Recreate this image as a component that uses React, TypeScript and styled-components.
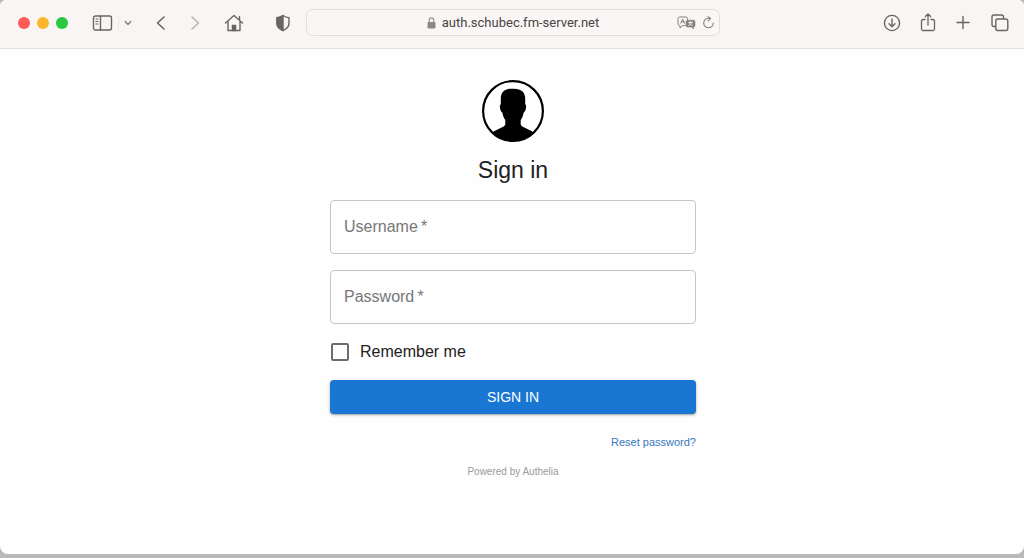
import React, { useState } from "react";
import styled, { createGlobalStyle } from "styled-components";

const GlobalStyle = createGlobalStyle`
  *, *::before, *::after { box-sizing: border-box; }
  body {
    margin: 0;
    background: #b9b9b9;
    font-family: "Liberation Sans", Arial, sans-serif;
    color: #212121;
  }
`;

const Desktop = styled.div`
  display: flex;
  min-height: 100vh;
  padding-bottom: 4px;
`;

const Window = styled.div`
  flex: 1;
  display: flex;
  flex-direction: column;
  min-width: 0;
  background: #fefefe;
  border-radius: 6px 6px 8px 8px;
  overflow: hidden;
`;

const Toolbar = styled.header`
  display: grid;
  grid-template-columns: 1fr minmax(0, 414px) 1fr;
  align-items: center;
  height: 49px;
  padding: 0 14px 3px 16px;
  background: #f9f5f4;
  border-bottom: 1px solid #e3dfde;
`;

const ToolGroup = styled.div<{ $end?: boolean }>`
  display: flex;
  align-items: center;
  gap: ${({ $end }) => ($end ? "16px" : "0")};
  justify-content: ${({ $end }) => ($end ? "flex-end" : "flex-start")};
`;

const TrafficLights = styled.div`
  display: flex;
  gap: 7px;
  padding-left: 2px;
`;

const Light = styled.button<{ $color: string }>`
  width: 12px;
  height: 12px;
  padding: 0;
  border: 0;
  border-radius: 50%;
  background: ${({ $color }) => $color};
`;

const ToolDivider = styled.span`
  width: 1px;
  height: 16px;
  margin-left: 5px;
  background: #eeeae9;
`;

const ToolButton = styled.button<{ $before?: number; $color?: string }>`
  display: flex;
  flex: none;
  margin: 0 0 0 ${({ $before = 0 }) => $before}px;
  padding: 0;
  border: 0;
  background: none;
  color: ${({ $color = "#696564" }) => $color};

  svg {
    display: block;
    fill: none;
    stroke: currentColor;
    stroke-width: 1.4;
    stroke-linecap: round;
    stroke-linejoin: round;
  }
`;

const AddressBar = styled.div`
  display: grid;
  grid-template-columns: 1fr auto 1fr;
  align-items: center;
  height: 27px;
  padding: 0 4px;
  border: 1px solid #e3dfde;
  border-radius: 7px;
  background: #faf6f5;
`;

const Address = styled.div`
  grid-column: 2;
  display: flex;
  align-items: center;
  gap: 6px;
  font: 13px/18px Roboto, sans-serif;
  color: #484443;
`;

const AddressTools = styled.div`
  display: flex;
  align-items: center;
  justify-content: flex-end;
  gap: 6px;
`;

const Page = styled.main`
  display: flex;
  flex-direction: column;
  align-items: center;
  padding: 31px 14px 24px 16px;
`;

const Title = styled.h1`
  margin: 14px 0 16px;
  font-size: 23px;
  line-height: 28px;
  font-weight: 400;
`;

const Form = styled.form`
  display: flex;
  flex-direction: column;
  width: 100%;
  max-width: 366px;
`;

const Field = styled.div`
  display: grid;
  height: 54px;
  margin-bottom: 16px;
`;

const FieldInput = styled.input`
  grid-area: 1 / 1;
  min-width: 0;
  padding: 0 14px;
  border: 1px solid #c6c6c6;
  border-radius: 4px;
  background: transparent;
  font: inherit;
  color: inherit;
  outline: none;

  &:focus { border-color: #1976d2; }
`;

const FieldLabel = styled.label<{ $hidden: boolean }>`
  grid-area: 1 / 1;
  align-self: center;
  padding-left: 14px;
  font-size: 16px;
  line-height: 24px;
  color: #777;
  pointer-events: none;
  visibility: ${({ $hidden }) => ($hidden ? "hidden" : "visible")};
`;

const Remember = styled.label`
  display: flex;
  align-items: center;
  gap: 11px;
  height: 24px;
  padding-left: 1px;
  margin-bottom: 16px;
  font-size: 16px;
`;

const Checkbox = styled.input`
  appearance: none;
  width: 18px;
  height: 18px;
  margin: 0;
  border: 2px solid #6c6c6c;
  border-radius: 2px;

  &:checked { background: #1976d2; border-color: #1976d2; }
`;

const Submit = styled.button`
  height: 34px;
  padding: 0;
  border: 0;
  border-radius: 4px;
  background: #1976d2;
  color: #fff;
  font: 14px/24px "Liberation Sans", Arial, sans-serif;
  text-transform: uppercase;
  box-shadow: 0 1px 2px rgba(0, 0, 0, 0.3), 0 1px 4px rgba(0, 0, 0, 0.12);
`;

const ResetLink = styled.a`
  align-self: flex-end;
  margin-top: 20px;
  font-size: 11px;
  line-height: 16px;
  color: #3878be;
  text-decoration: none;
`;

const Powered = styled.a`
  margin-top: 14px;
  font-size: 10px;
  line-height: 16px;
  color: #9b9b9b;
  text-decoration: none;
`;

function Avatar() {
  return (
    <svg width="62" height="62" viewBox="0 0 62 62" aria-hidden="true">
      <circle cx="31" cy="31" r="29.9" fill="#fff" stroke="#000" strokeWidth="2.2" />
      <path d="M31 8.700C23 8.400 18.800 12 18.800 18.500V24.300C17.500 25 17.600 28 18.700 30.500C19.200 31.800 19.800 32.300 20.300 32.500C20.900 35.500 21.800 38 23.300 40V44.500C22.300 47.500 15.800 48.400 10.500 52.500C16 58 23 61 31 61S46 58 51.500 52.500C46.200 48.400 39.700 47.500 38.700 44.500V40C40.200 38 41.100 35.500 41.700 32.500C42.200 32.300 42.800 31.800 43.300 30.500C44.400 28 44.500 25 43.200 24.300V18.500C43.200 12 39 8.400 31 8.700Z" />
    </svg>
  );
}

function TextField({ id, label, type = "text" }: { id: string; label: string; type?: string }) {
  const [value, setValue] = useState("");
  return (
    <Field>
      <FieldInput id={id} type={type} required value={value} onChange={(e) => setValue(e.target.value)} />
      <FieldLabel htmlFor={id} $hidden={value !== ""}>{label}&thinsp;*</FieldLabel>
    </Field>
  );
}

function BrowserToolbar() {
  return (
    <Toolbar>
      <ToolGroup>
        <TrafficLights>
          <Light $color="#fc5b57" aria-label="Close" />
          <Light $color="#fbb62b" aria-label="Minimize" />
          <Light $color="#28c840" aria-label="Zoom" />
        </TrafficLights>
        <ToolButton $before={24} aria-label="Sidebar">
          <svg width="21" height="16" viewBox="0 0 21 16">
            <rect x="1.5" y="1" width="18" height="14" rx="2" />
            <path d="M8.5 1v14" />
            <path d="M4 4h2M4 6.500h2M4 9h2" strokeWidth="1" />
          </svg>
        </ToolButton>
        <ToolDivider />
        <ToolButton $before={4} $color="#858180" aria-label="Tab groups">
          <svg width="10" height="8" viewBox="0 0 10 8"><path d="M2.200 2.500L5 5.500l2.800-3" /></svg>
        </ToolButton>
        <ToolButton $before={22} aria-label="Back">
          <svg width="12" height="16" viewBox="0 0 12 16"><path d="M9 2L2.500 8L9 14" strokeWidth="1.6" /></svg>
        </ToolButton>
        <ToolButton $before={22} $color="#b9b5b4" aria-label="Forward">
          <svg width="12" height="16" viewBox="0 0 12 16"><path d="M3 2l6.500 6L3 14" strokeWidth="1.6" /></svg>
        </ToolButton>
        <ToolButton $before={23} aria-label="Home">
          <svg width="20" height="18" viewBox="0 0 20 18">
            <path d="M1.500 9L10 1.500L18.500 9M4 7.500V16.500H16V7.500M15.500 6V2.500" />
            <path d="M8 16.500V11h4v5.500z" fill="currentColor" strokeWidth="0.5" />
          </svg>
        </ToolButton>
        <ToolButton $before={32} aria-label="Privacy report">
          <svg width="14" height="18" viewBox="0 0 14 18">
            <path d="M7 1.500C5 3 3 3.500 1 3.700V9.500C1 13 4 15.200 7 16.500C10 15.200 13 13 13 9.500V3.700C11 3.500 9 3 7 1.500Z" />
            <path d="M7 1.500C5 3 3 3.500 1 3.700V9.500C1 13 4 15.200 7 16.500Z" fill="currentColor" />
          </svg>
        </ToolButton>
      </ToolGroup>
      <AddressBar>
        <Address>
          <svg width="9" height="12" viewBox="0 0 9 12" aria-hidden="true">
            <path d="M2.200 6V3.500a2.300 2.600 0 0 1 4.600 0V6" fill="none" stroke="#989493" strokeWidth="1.200" />
            <rect x="0.500" y="5" width="8" height="6.500" rx="1.200" fill="#8d8988" />
          </svg>
          auth.schubec.fm-server.net
        </Address>
        <AddressTools>
          <ToolButton $color="#858180" aria-label="Translate">
            <svg width="19" height="14" viewBox="0 0 19 14">
              <path d="M8 9.500H5.500L3 12V9.500H2.500Q1 9.500 1 8V2.500Q1 1 2.500 1H9Q10.500 1 10.500 2.500V3.500M3.800 7.200L5.700 3L7.500 7.200M4.500 5.800H7" strokeWidth="1" />
              <path d="M10.500 4.200H16.500Q18 4.200 18 5.700V9.500Q18 11 16.500 11V13L14.500 11H10.500Q9 11 9 9.500V5.700Q9 4.200 10.500 4.200Z" fill="currentColor" strokeWidth="0.6" />
              <path d="M11.500 6.500h4M13.500 5.500v1M15 6.500Q14.200 8.800 11.700 9.500M12.200 6.800Q13 8.800 15.300 9.500" stroke="#faf6f5" strokeWidth="0.8" />
            </svg>
          </ToolButton>
          <ToolButton $color="#858180" aria-label="Reload">
            <svg width="13" height="14" viewBox="0 0 13 14">
              <path d="M11.300 7A4.800 4.800 0 1 1 6.500 2.200H8.200M6 0.600L8.400 2.300L6.200 4.800" strokeWidth="1.100" />
            </svg>
          </ToolButton>
        </AddressTools>
      </AddressBar>
      <ToolGroup $end>
        <ToolButton aria-label="Downloads">
          <svg width="20" height="20" viewBox="0 0 20 20">
            <circle cx="10" cy="10" r="7.600" />
            <path d="M10 6v7.500M7 10.800l3 3l3-3" />
          </svg>
        </ToolButton>
        <ToolButton aria-label="Share">
          <svg width="20" height="20" viewBox="0 0 20 20">
            <path d="M7 6.500H5Q3.500 6.500 3.500 8V16Q3.500 17.500 5 17.500H15Q16.500 17.500 16.500 16V8Q16.500 6.500 15 6.500H13M10 12V1M7.300 3.500L10 1L12.700 3.500" strokeWidth="1.300" />
          </svg>
        </ToolButton>
        <ToolButton aria-label="New tab">
          <svg width="20" height="20" viewBox="0 0 20 20"><path d="M3 9.500H15M9 3.500V15.500" /></svg>
        </ToolButton>
        <ToolButton aria-label="Tab overview">
          <svg width="20" height="20" viewBox="0 0 20 20">
            <rect x="5.800" y="6" width="12" height="11.500" rx="2" />
            <path d="M5.500 13.500H4Q2 13.500 2 11.500V4Q2 2 4 2H11.500Q13.500 2 13.500 4V5.500" />
          </svg>
        </ToolButton>
      </ToolGroup>
    </Toolbar>
  );
}

export default function App() {
  return (
    <>
      <GlobalStyle />
      <Desktop>
        <Window>
          <BrowserToolbar />
          <Page>
            <Avatar />
            <Title>Sign in</Title>
            <Form onSubmit={(e) => e.preventDefault()}>
              <TextField id="username" label="Username" />
              <TextField id="password" label="Password" type="password" />
              <Remember>
                <Checkbox type="checkbox" />
                Remember me
              </Remember>
              <Submit type="submit">Sign in</Submit>
              <ResetLink href="#reset">Reset password?</ResetLink>
            </Form>
            <Powered href="#authelia">Powered by Authelia</Powered>
          </Page>
        </Window>
      </Desktop>
    </>
  );
}
